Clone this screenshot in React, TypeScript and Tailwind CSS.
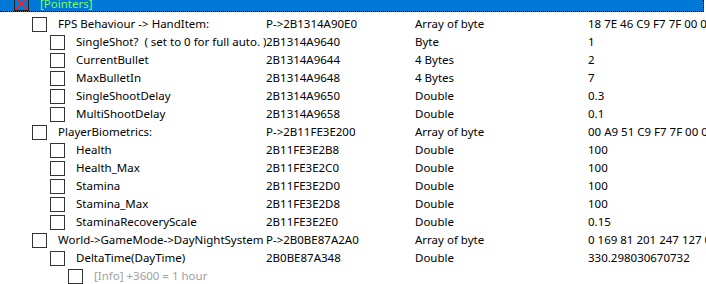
import React from "react";

type Row = { level: number; desc: string; addr: string; type: string; value: string; info?: boolean };

const rows: Row[] = [
  { level: 1, desc: "FPS Behaviour -> HandItem:", addr: "P->2B1314A90E0", type: "Array of byte", value: "18 7E 46 C9 F7 7F 00 00" },
  { level: 2, desc: "SingleShot?  ( set to 0 for full auto. )", addr: "2B1314A9640", type: "Byte", value: "1" },
  { level: 2, desc: "CurrentBullet", addr: "2B1314A9644", type: "4 Bytes", value: "2" },
  { level: 2, desc: "MaxBulletIn", addr: "2B1314A9648", type: "4 Bytes", value: "7" },
  { level: 2, desc: "SingleShootDelay", addr: "2B1314A9650", type: "Double", value: "0.3" },
  { level: 2, desc: "MultiShootDelay", addr: "2B1314A9658", type: "Double", value: "0.1" },
  { level: 1, desc: "PlayerBiometrics:", addr: "P->2B11FE3E200", type: "Array of byte", value: "00 A9 51 C9 F7 7F 00 00" },
  { level: 2, desc: "Health", addr: "2B11FE3E2B8", type: "Double", value: "100" },
  { level: 2, desc: "Health_Max", addr: "2B11FE3E2C0", type: "Double", value: "100" },
  { level: 2, desc: "Stamina", addr: "2B11FE3E2D0", type: "Double", value: "100" },
  { level: 2, desc: "Stamina_Max", addr: "2B11FE3E2D8", type: "Double", value: "100" },
  { level: 2, desc: "StaminaRecoveryScale", addr: "2B11FE3E2E0", type: "Double", value: "0.15" },
  { level: 1, desc: "World->GameMode->DayNightSystem", addr: "P->2B0BE87A2A0", type: "Array of byte", value: "0 169 81 201 247 127 0 0" },
  { level: 2, desc: "DeltaTime(DayTime)", addr: "2B0BE87A348", type: "Double", value: "330.298030670732" },
  { level: 3, desc: "[Info] +3600 = 1 hour", addr: "", type: "", value: "", info: true },
];

const font = { fontFamily: '"Noto Sans", "Open Sans", sans-serif' };

function Box() {
  return <div className="w-[15px] h-[15px] border border-[#333333] bg-white shrink-0" />;
}

export default function App() {
  return (
    <div className="w-[706px] h-[284px] overflow-hidden bg-white text-[11.5px] leading-none text-black" style={font}>
      <div className="w-[704px] h-[12px] bg-[#0078d7] border-b border-r border-dotted border-b-black border-r-black flex items-end overflow-hidden">
        <div className="ml-[14px] w-[15px] h-[15px] shrink-0 border border-[#222] relative">
          <svg width="13" height="13" viewBox="0 0 13 13" className="absolute left-0 top-0">
            <line x1="1" y1="1" x2="12" y2="12" stroke="#ff2020" strokeWidth="1" />
            <line x1="12" y1="1" x2="1" y2="12" stroke="#ff2020" strokeWidth="1" />
          </svg>
        </div>
        <span className="ml-[11px] text-[#7cff5c] self-start -mt-[2px]">[Pointers]</span>
      </div>
      <div className="h-[3px]" />
      {rows.map((r, i) => (
        <div key={i} className="flex h-[18px] items-center whitespace-pre">
          <div className="flex items-center w-[266px] overflow-hidden shrink-0" style={{ paddingLeft: 14 + r.level * 18 }}>
            <Box />
            <span className={"ml-[11px] " + (r.info ? "text-[#a0a0a0]" : "")}>{r.desc}</span>
          </div>
          <div className="w-[149px] shrink-0">{r.addr}</div>
          <div className="w-[173px] shrink-0">{r.type}</div>
          <div className="overflow-hidden">{r.value}</div>
        </div>
      ))}
    </div>
  );
}
